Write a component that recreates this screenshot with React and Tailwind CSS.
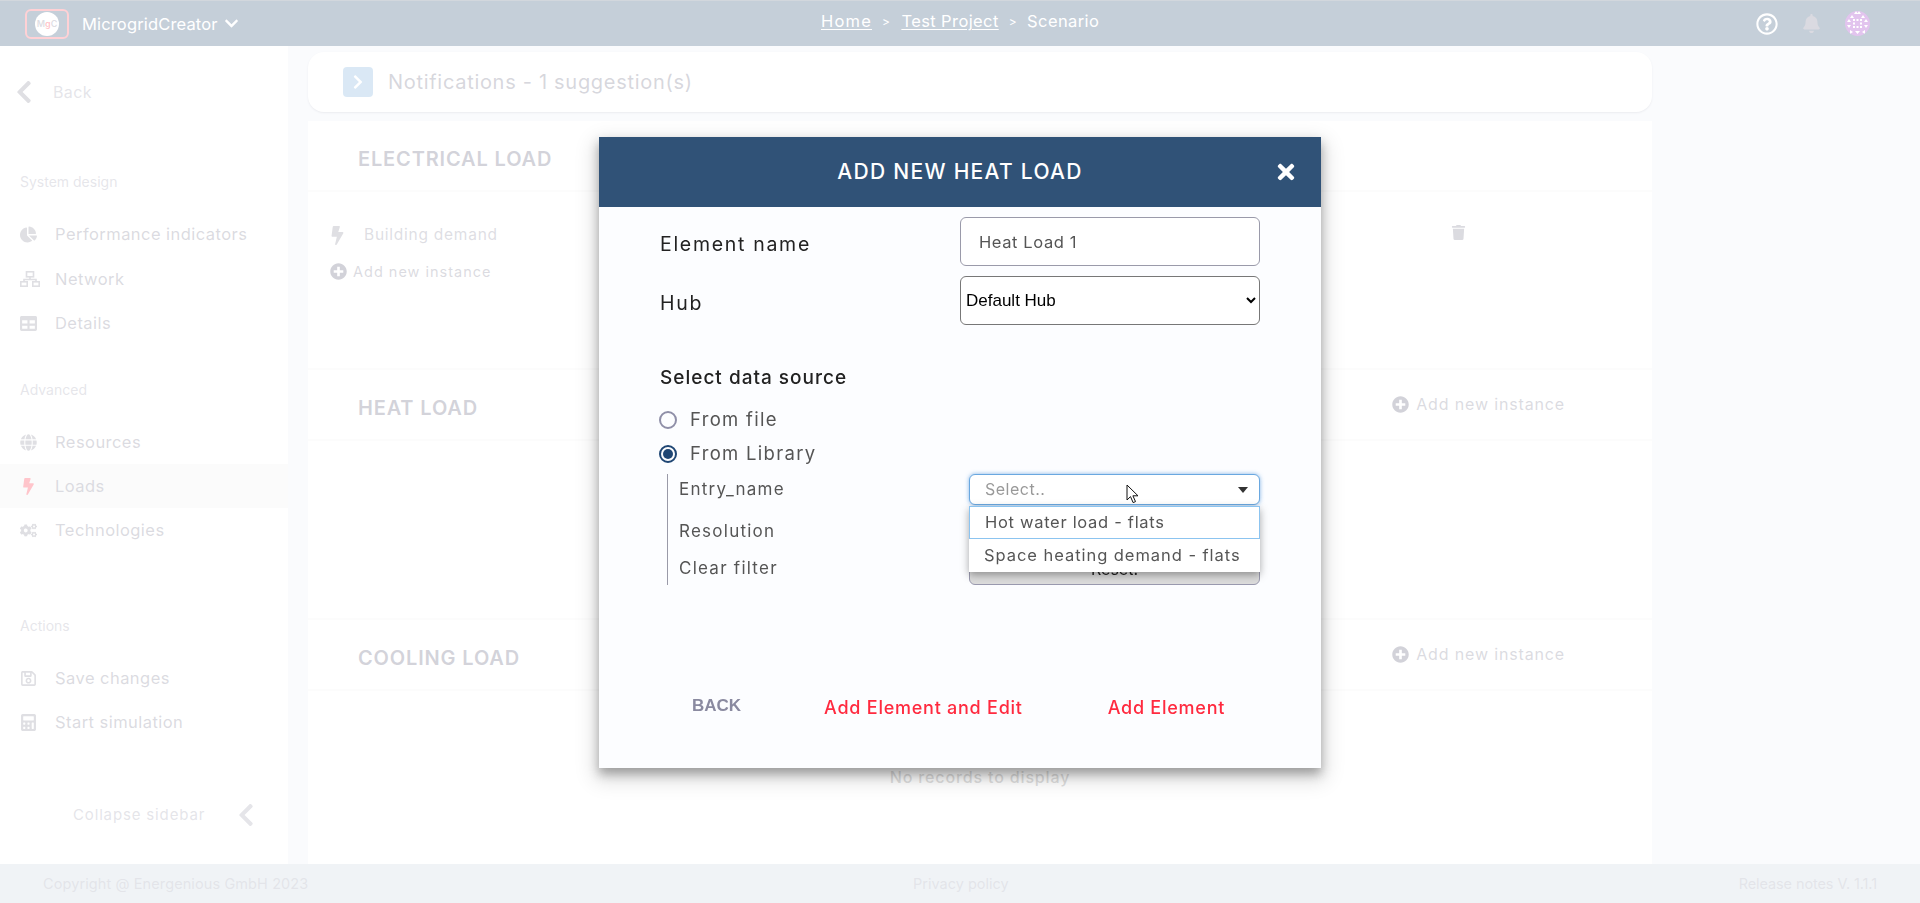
import {
  FaBell,
  FaBolt,
  FaCalculator,
  FaChartPie,
  FaChevronDown,
  FaChevronLeft,
  FaChevronRight,
  FaCogs,
  FaGlobe,
  FaPlusCircle,
  FaRegQuestionCircle,
  FaRegSave,
  FaTable,
  FaTimes,
  FaTrash,
} from "react-icons/fa";

const font = "font-['Inter','Noto_Sans',sans-serif]";

// outlined network icon, the fa sitemap one is filled
const NetworkIcon = () => (
  <svg width="20" height="16" viewBox="0 0 20 16" fill="none" stroke="currentColor" strokeWidth="1.6">
    <rect x="6.500" y="0.800" width="7" height="5" />
    <rect x="0.800" y="10.800" width="6.400" height="4.400" />
    <rect x="12.800" y="10.800" width="6.400" height="4.400" />
    <path d="M10 6v2.500M4 10.500V8.500h12v2" />
  </svg>
);

const NavItem = ({ icon, label, active }) => (
  <div className={`flex items-center h-[44px] pl-[20px] ${active ? "bg-[#f0f0f0]" : ""}`}>
    <span className={`w-[35px] text-[17px] ${active ? "text-[#ff3045]" : "text-[#8b8b99]"}`}>{icon}</span>
    <span className="text-[16.5px] text-[#7f7f92] tracking-[0.45px]">{label}</span>
  </div>
);

const SectionLabel = ({ children, className }) => (
  <div className={`pl-[20px] h-[20px] leading-[20px] text-[14px] text-[#a5a5b5] ${className}`}>{children}</div>
);

const Sidebar = () => (
  <aside className="w-[288px] shrink-0 bg-white pt-[24px]">
    <div className="flex items-center h-[44px] pl-[11px]">
      <FaChevronLeft className="text-[26px] text-[#8b8b99]" />
      <span className="ml-[16px] text-[16px] tracking-[0.4px] text-[#a0a0b0]">Back</span>
    </div>
    <SectionLabel className="mt-[58px]">System design</SectionLabel>
    <div className="mt-[20px]">
      <NavItem icon={<FaChartPie />} label="Performance indicators" />
      <div className="mt-[1px]">
        <NavItem icon={<NetworkIcon />} label="Network" />
      </div>
      <NavItem icon={<FaTable />} label="Details" />
    </div>
    <SectionLabel className="mt-[35px]">Advanced</SectionLabel>
    <div className="mt-[20px]">
      <NavItem icon={<FaGlobe />} label="Resources" />
      <NavItem icon={<FaBolt />} label="Loads" active />
      <NavItem icon={<FaCogs />} label="Technologies" />
    </div>
    <SectionLabel className="mt-[64px]">Actions</SectionLabel>
    <div className="mt-[20px]">
      <NavItem icon={<FaRegSave />} label="Save changes" />
      <NavItem icon={<FaCalculator />} label="Start simulation" />
    </div>
    <div className="flex items-center h-[44px] mt-[49px] pl-[73px]">
      <span className="text-[15px] text-[#a0a0b0] tracking-[0.85px]">Collapse sidebar</span>
      <FaChevronLeft className="ml-[28px] text-[26px] text-[#a0a0b0]" />
    </div>
  </aside>
);

const AddInstance = ({ small }) => (
  <div className={`flex items-center text-[#7f7f92] ${small ? "text-[14.5px] tracking-[1px] gap-[6px]" : "text-[16px] tracking-[0.85px] gap-[7px]"}`}>
    <FaPlusCircle className="text-[#5f5f78] text-[17px]" />
    <span>Add new instance</span>
  </div>
);

const SectionHeader = ({ title, action }) => (
  <div className="flex items-center justify-between h-[71px] pl-[50px] pr-[87px] border-b-2 border-[#f2f2f2]">
    <h3 className="pt-[7px] text-[20px] tracking-[0.85px] font-semibold text-[#62627a]">{title}</h3>
    {action && (
      <div className="-mt-[1px]">
        <AddInstance />
      </div>
    )}
  </div>
);

const Content = () => (
  <main className="w-[1344px] ml-[20px] shrink-0 flex flex-col pt-[6px]">
    <div className="flex items-center h-[60px] pl-[35px] bg-white rounded-2xl shadow-[0_1px_2px_rgba(60,60,90,0.3)] shrink-0">
      <span className="flex items-center justify-center w-[30px] h-[30px] rounded bg-[#7aaedc]">
        <FaChevronRight className="text-white text-[16px]" />
      </span>
      <span className="ml-[15px] text-[20px] text-[#6f6f84] tracking-[0.7px]">Notifications - 1 suggestion(s)</span>
    </div>
    <section className="mt-[9px] h-[249px] bg-white border-b-2 border-[#f2f2f2] shrink-0">
      <SectionHeader title="ELECTRICAL LOAD" />
      <div className="flex items-center justify-between h-[44px] mt-[21px] pl-[20px] pr-[186px] text-[#8a8a9c]">
        <div className="flex items-center">
          <FaBolt className="text-[#8b8b99] text-[19px]" />
          <span className="ml-[17px] text-[15.5px] tracking-[0.75px]">Building demand</span>
        </div>
        <FaTrash className="-mt-[5px] text-[#7d7d90] text-[15px]" />
      </div>
      <div className="pl-[22px] mt-[4px]">
        <AddInstance small />
      </div>
    </section>
    <section className="h-[250px] bg-white border-b-2 border-[#f2f2f2] shrink-0">
      <SectionHeader title="HEAT LOAD" action />
    </section>
    <section className="flex-1 bg-white">
      <SectionHeader title="COOLING LOAD" action />
      <p className="mt-[74px] text-center text-[16px] tracking-[0.85px] font-medium text-[#8a8a8a]">No records to display</p>
    </section>
  </main>
);

const Identicon = () => (
  <svg width="25" height="25" viewBox="0 0 25 25" className="rounded-full">
    <rect width="25" height="25" fill="#972cc2" />
    <g fill="#ffffff">
      <path d="M9 3l2-3 2 3zM12 3l2-3 2 3zM5 7l2-3 2 3zM16 7l2-3 2 3zM2 11l2-3 2 3zM19 11l2-3 2 3z" />
      <path d="M8 8h2v2H8zM11.500 8h2v2h-2zM15 8h2v2h-2zM8 11.500h2v2H8zM15 11.500h2v2h-2zM8 15h2v2H8zM11.500 15h2v2h-2zM15 15h2v2h-2z" />
      <path d="M2 14l2 3 2-3zM19 14l2 3 2-3zM10 20l2.500 3 2.500-3z" />
      <path d="M5 19l3 2-3 2zM20 19l-3 2 3 2z" />
    </g>
  </svg>
);

const Header = () => (
  <header className="h-[46px] shrink-0 flex items-center bg-[#305277] border-t border-[#5f6f85] text-white">
    <div className="ml-[25px] w-[44px] h-[30px] rounded-md border-2 border-[#ff5a6a] flex items-center justify-center">
      <span className="w-[24px] h-[24px] rounded-full bg-white flex items-center justify-center text-[9px] font-semibold text-[#8a8a9c]">
        M<span className="text-[#ff3045]">g</span>C
      </span>
    </div>
    <span className="ml-[13px] pt-[2px] text-[16.5px] tracking-[0.15px]">MicrogridCreator</span>
    <FaChevronDown className="ml-[6px] text-[15px]" />
    <nav className="absolute left-[821px] top-0 flex items-center h-[43px] text-[16.5px] tracking-[0.4px]">
      <a className="underline underline-offset-2 tracking-[1.2px]">Home</a>
      <span className="ml-[10px] text-[12px]">&gt;</span>
      <a className="ml-[11px] underline underline-offset-2">Test Project</a>
      <span className="ml-[10px] text-[12px]">&gt;</span>
      <span className="ml-[10px]">Scenario</span>
    </nav>
    <div className="ml-auto mr-[50px] flex items-center">
      <FaRegQuestionCircle className="text-[22px]" />
      <FaBell className="ml-[24px] text-[19px] text-[#7c7c92]" />
      <span className="ml-[24px] flex">
        <Identicon />
      </span>
    </div>
  </header>
);

const Footer = () => (
  <footer className="h-[39px] shrink-0 flex items-center justify-between pl-[43px] pr-[43px] bg-[#c9d4df] text-[14.5px] text-[#9a9fb0]">
    <span className="tracking-[0.1px]">Copyright @ Energenious GmbH 2023</span>
    <span className="absolute left-[913px]">Privacy policy</span>
    <span className="tracking-[-0.1px]">Release notes V. 1.1.1</span>
  </footer>
);

const Radio = ({ checked, label }) => (
  <div className="flex items-center h-[34px]">
    <span className={`-ml-[1px] flex items-center justify-center w-[18px] h-[18px] rounded-full border-2 ${checked ? "border-[#1f4674]" : "border-[#8f8fa8]"}`}>
      {checked && <span className="w-[10px] h-[10px] rounded-full bg-[#1f4674]" />}
    </span>
    <span className="ml-[13px] text-[18.5px] tracking-[1.3px] text-[#555]">{label}</span>
  </div>
);

const EntrySelect = () => (
  <div className="relative w-[291px] h-[31px]">
    <div className="flex items-center justify-between h-full pl-[15px] pr-[11px] rounded-md border border-[#6aa8e0] bg-white shadow-[0_0_4px_rgba(80,150,220,0.7)]">
      <span className="-mt-[1px] text-[16px] tracking-[0.5px] text-[#999]">Select..</span>
      <span className="w-0 h-0 border-x-[5px] border-x-transparent border-t-[6px] border-t-[#333]" />
    </div>
    <svg width="14" height="20" viewBox="0 0 14 20" className="absolute left-[157px] top-[10px]">
      <path d="M1 1v15l3.500-3.400 2.600 6 2.400-1-2.600-5.800H12z" fill="#fff" stroke="#111" strokeWidth="1" />
    </svg>
    <div className="absolute left-0 right-0 top-[32px] h-[66px] bg-white shadow-[0_3px_8px_rgba(0,0,0,0.35)] text-[16.5px] text-[#555]">
      <div className="flex items-center h-[33px] pl-[15px] border border-[#8cc4f0] tracking-[0.7px]">Hot water load - flats</div>
      <div className="flex items-center h-[33px] pl-[15px] tracking-[0.95px]">Space heating demand - flats</div>
    </div>
  </div>
);

const AddHeatLoadModal = () => (
  <div className="fixed inset-0 pt-[2px] flex items-center justify-center bg-white/[0.72]">
    <div className={`w-[722px] h-[631px] bg-[#fcfdff] shadow-[0_6px_10px_0_rgba(0,0,0,0.3),0_8px_20px_4px_rgba(0,0,0,0.14)] ${font}`}>
      <div className="relative flex items-center justify-center h-[70px] bg-[#305277] text-white">
        <h2 className="text-[21px] tracking-[1.3px] font-medium">ADD NEW HEAT LOAD</h2>
        <FaTimes className="absolute right-[23px] top-[23px] text-[24px]" />
      </div>
      <div className="px-[61px] pt-[10px]">
        <div className="flex items-center justify-between h-[49px]">
          <label className="pt-[6px] text-[19.5px] tracking-[1.7px] text-[#222]">Element name</label>
          <input
            readOnly
            defaultValue="Heat Load 1"
            className="w-[300px] h-full px-[18px] rounded-md border border-[#9a9aaa] bg-white text-[16.5px] tracking-[0.6px] text-[#555]"
          />
        </div>
        <div className="flex items-center justify-between h-[49px] mt-[10px]">
          <label className="pt-[6px] text-[19.5px] tracking-[1.7px] text-[#222]">Hub</label>
          <select className="w-[300px] h-full pl-[1px] rounded-md border border-[#777] bg-white text-[17px] text-black font-['Liberation_Sans',sans-serif]">
            <option>Default Hub</option>
          </select>
        </div>
        <h4 className="mt-[41px] h-[24px] leading-[24px] text-[19px] tracking-[1px] font-medium text-[#222]">Select data source</h4>
        <div className="mt-[13px]">
          <Radio label="From file" />
          <Radio checked label="From Library" />
        </div>
        <div className="mt-[3px] ml-[7px] pl-[11px] border-l border-[#9a9aa8] text-[17px] tracking-[1.25px] text-[#555]">
          <div className="flex items-center justify-between h-[31px]">
            <span>Entry_name</span>
            <EntrySelect />
          </div>
          <div className="flex items-center h-[32px] mt-[11px]">Resolution</div>
          <div className="flex items-center justify-between h-[32px] mt-[5px]">
            <span>Clear filter</span>
            <button className="w-[291px] h-full rounded-md border border-[#9a9aaf] bg-[#dcdcdc] text-[16px] tracking-normal text-[#222]">Reset!</button>
          </div>
        </div>
        <div className="flex items-center h-[40px] mt-[101px]">
          <button className="ml-[32px] text-[17px] font-bold text-[#8a8aa0] font-['Liberation_Sans',sans-serif]">BACK</button>
          <button className="ml-[83px] mt-[3px] text-[18px] tracking-[0.75px] font-medium text-[#ff2a3f]">Add Element and Edit</button>
          <button className="ml-[85px] mt-[3px] text-[18px] tracking-[0.75px] font-medium text-[#ff2a3f]">Add Element</button>
        </div>
      </div>
    </div>
  </div>
);

export default function App() {
  return (
    <div className={`relative h-screen flex flex-col overflow-hidden bg-[#edf1f8] ${font}`}>
      <Header />
      <div className="flex flex-1 min-h-0">
        <Sidebar />
        <Content />
      </div>
      <Footer />
      <AddHeatLoadModal />
    </div>
  );
}
